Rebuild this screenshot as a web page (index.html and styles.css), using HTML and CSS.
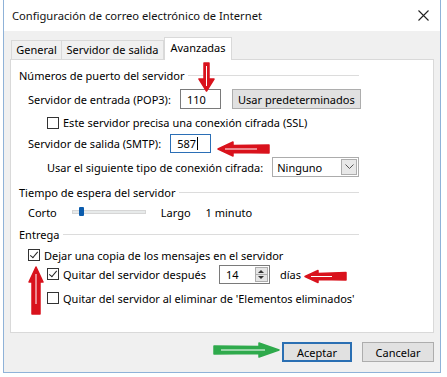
FILE: index.html
```html
<!DOCTYPE html>
<html lang="es">
<head>
    <meta charset="utf-8">
    <title>Configuración de correo electrónico de Internet</title>
    <link rel="stylesheet" href="styles.css">
</head>
<body>
    <div class="window">
        <div class="titleBar">
            <span class="title">Configuración de correo electrónico de Internet</span>
            <svg class="closeIcon" width="11" height="11" viewBox="0 0 11 11">
                <path d="M0.5 0.5 L10.5 10.5 M10.5 0.5 L0.5 10.5" stroke="#222" stroke-width="1.1" fill="none"/>
            </svg>
        </div>
        <div class="dialogBody">
            <div class="tabs">
                <div class="tab tabGeneral">General</div>
                <div class="tab tabOutgoing">Servidor de salida</div>
                <div class="tab tabActive">Avanzadas</div>
            </div>
            <div class="panel">
                <div class="groupTitle rowFirst"><span>Números de puerto del servidor</span></div>

                <div class="row rowPop">
                    <span class="label">Servidor de entrada (POP3):</span>
                    <div class="textBox boxPop">110</div>
                    <button class="winButton btnDefaults">Usar predeterminados</button>
                </div>

                <div class="row rowSsl indent2">
                    <span class="checkBox"></span>
                    <span>Este servidor precisa una conexión cifrada (SSL)</span>
                </div>

                <div class="row rowSmtp">
                    <span class="label">Servidor de salida (SMTP):</span>
                    <div class="textBox boxSmtp focused">587<span class="caret"></span></div>
                </div>

                <div class="row rowEnc indent2">
                    <span class="label">Usar el siguiente tipo de conexión cifrada:</span>
                    <div class="comboBox">
                        <span class="comboText">Ninguno</span>
                        <span class="comboArrow">
                            <svg width="9" height="6" viewBox="0 0 9 6"><path d="M0.5 0.5 L4.5 4.5 L8.5 0.5" stroke="#555" fill="none"/></svg>
                        </span>
                    </div>
                </div>

                <div class="groupTitle rowTimeout"><span>Tiempo de espera del servidor</span></div>

                <div class="row rowSlider">
                    <span class="sliderLabel">Corto</span>
                    <div class="slider"><span class="sliderThumb"></span></div>
                    <span class="sliderLabel">Largo</span>
                    <span>1 minuto</span>
                </div>

                <div class="groupTitle rowDelivery"><span>Entrega</span></div>

                <div class="row rowLeave">
                    <span class="checkBox checked"></span>
                    <span>Dejar una copia de los mensajes en el servidor</span>
                </div>

                <div class="row rowRemove indent2">
                    <span class="checkBox checked"></span>
                    <span class="removeText">Quitar del servidor después</span>
                    <div class="spinBox">
                        <span class="spinText">14</span>
                        <span class="spinButtons">
                            <span class="spinUp"></span>
                            <span class="spinDown"></span>
                        </span>
                    </div>
                    <span>días</span>
                </div>

                <div class="row rowDeleted indent2">
                    <span class="checkBox"></span>
                    <span>Quitar del servidor al eliminar de 'Elementos eliminados'</span>
                </div>
            </div>

            <div class="dialogButtons">
                <button class="winButton btnOk">Aceptar</button>
                <button class="winButton btnCancel">Cancelar</button>
            </div>
        </div>

        <!-- hand drawn arrows on top of the dialog -->
        <svg class="arrow arrowDown" width="20" height="30" viewBox="0 0 20 30">
            <path d="M7 1 L12 1 L12 17 L17 17 L9.5 29 L2 17 L7 17 Z" fill="#d9121c" stroke="#d9121c" stroke-linejoin="round" stroke-width="1.5"/>
            <path d="M9.5 4 L9.5 24" stroke="#fff" stroke-width="1"/>
        </svg>
        <svg class="arrow arrowSmtp" width="54" height="18" viewBox="0 0 54 18">
            <path d="M1 9 L16 2 L16 5.5 L52 5 L52 13 L16 12.5 L16 16 Z" fill="#d9121c" stroke="#d9121c" stroke-linejoin="round" stroke-width="1.5"/>
            <path d="M8 9 L40 9" stroke="#fff" stroke-width="1"/>
        </svg>
        <svg class="arrow arrowDays" width="44" height="15" viewBox="0 0 44 15">
            <path d="M1 7.5 L14 1.5 L14 4.5 L42 3.5 L42 11 L14 10.5 L14 13.5 Z" fill="#d9121c" stroke="#d9121c" stroke-linejoin="round" stroke-width="1.5"/>
            <path d="M7 7.5 L28 7.5" stroke="#fff" stroke-width="1"/>
        </svg>
        <svg class="arrow arrowUp" width="16" height="50" viewBox="0 0 16 50">
            <path d="M8 1 L15 16 L12 16 L12 48 L4 48 L4 16 L1 16 Z" fill="#d9121c" stroke="#d9121c" stroke-linejoin="round" stroke-width="1.5"/>
            <path d="M8 8 L8 38" stroke="#fff" stroke-width="1"/>
        </svg>
        <svg class="arrow arrowOk" width="68" height="18" viewBox="0 0 68 18">
            <path d="M1 5 L46 5.5 L46 2 L66 9 L46 16 L46 12.5 L1 13 Z" fill="#2faa4c" stroke="#2faa4c" stroke-linejoin="round" stroke-width="1.5"/>
            <path d="M8 9 L52 9" stroke="#fff" stroke-width="1"/>
        </svg>
    </div>
</body>
</html>
```

FILE: styles.css
```css
body {
    margin: 0;
    padding: 0;
    background-color: #ffffff;
    color: #000;
    font: 11px 'Noto Sans', 'Liberation Sans', sans-serif;
}

.window {
    position: relative;
    width: 436px;
    height: 372px;
    margin-left: 3px;
    border: 1px solid #8fb2d8;
    border-top: none;
    background-color: #f0f0f0;
}

.titleBar {
    height: 31px;
    background-color: #ffffff;
    display: flex;
    align-items: center;
    justify-content: space-between;
    padding: 0 8px 0 8px;
}

.title {
    font-size: 11.2px;
    color: #111;
    padding-bottom: 1px;
}

.closeIcon {
    margin-right: 3px;
}

.dialogBody {
    padding: 8px 6px 0 6px;
}

/* tabs */
.tabs {
    display: flex;
    align-items: flex-end;
    height: 20px;
    padding-left: 1px;
}

.tab {
    height: 19px;
    box-sizing: border-box;
    border: 1px solid #d9d9d9;
    border-bottom: none;
    background-color: #f0f0f0;
    line-height: 18px;
    text-align: center;
}

.tabGeneral {
    width: 51px;
}

.tabOutgoing {
    width: 102px;
    border-left: none;
}

.tabActive {
    width: 68px;
    height: 23px;
    margin-bottom: -1px;
    background-color: #ffffff;
    position: relative;
    z-index: 1;
    line-height: 20px;
}

.panel {
    height: 272px;
    border: 1px solid #d9d9d9;
    background-color: #ffffff;
}

/* rows inside the panel */
.row {
    display: flex;
    align-items: center;
    padding-left: 17px;
    white-space: nowrap;
}

.indent2 {
    padding-left: 36px;
}

.groupTitle {
    display: flex;
    align-items: center;
    width: 340px;
    height: 18px;
    margin-left: 8px;
    white-space: nowrap;
}

.groupTitle::after {
    content: "";
    flex: 1;
    border-top: 1px solid #dcdcdc;
    margin-left: 4px;
}

.rowFirst { margin-top: 6px; }
.rowPop { height: 20px; margin-top: 5px; }
.rowSsl { height: 17px; margin-top: 5px; }
.rowSmtp { height: 19px; margin-top: 3px; }
.rowEnc { height: 20px; margin-top: 4px; }
.rowTimeout { margin-top: 6px; }
.rowSlider { height: 18px; margin-top: 2px; }
.rowDelivery { margin-top: 4px; }
.rowLeave { height: 18px; margin-top: 3px; }
.rowRemove { height: 20px; margin-top: 0; }
.rowDeleted { height: 18px; margin-top: 5px; }

.label {
    margin-right: 9px;
}

.textBox {
    box-sizing: border-box;
    border: 1px solid #7a7a7a;
    background-color: #fff;
    padding-left: 6px;
    display: flex;
    align-items: center;
}

.boxPop {
    width: 41px;
    height: 20px;
    margin-right: 11px;
}

.boxSmtp {
    width: 41px;
    height: 19px;
}

.focused {
    border-color: #2b6fb6;
}

.caret {
    display: inline-block;
    width: 1px;
    height: 13px;
    background-color: #000;
    margin-left: 1px;
}

.checkBox {
    display: inline-block;
    box-sizing: border-box;
    width: 12px;
    height: 12px;
    border: 1px solid #333;
    background-color: #fff;
    margin-right: 4px;
    position: relative;
}

.checkBox.checked::after {
    content: "";
    position: absolute;
    left: 3px;
    top: 0px;
    width: 3px;
    height: 7px;
    border-right: 1.5px solid #222;
    border-bottom: 1.5px solid #222;
    transform: rotate(40deg);
}

.comboBox {
    box-sizing: border-box;
    width: 87px;
    height: 20px;
    border: 1px solid #acacac;
    background-color: #fff;
    display: flex;
    align-items: center;
    justify-content: space-between;
    padding: 0 1px 0 4px;
}

.comboArrow {
    box-sizing: border-box;
    width: 16px;
    height: 16px;
    border: 1px solid #adadad;
    background-color: #e8e8e8;
    display: flex;
    align-items: center;
    justify-content: center;
}

.sliderLabel {
    margin-right: 15px;
}

.slider {
    position: relative;
    box-sizing: border-box;
    width: 74px;
    height: 4px;
    background-color: #e7eaea;
    border: 1px solid #d6d6d6;
    margin-right: 15px;
}

.sliderThumb {
    position: absolute;
    left: 6px;
    top: -4px;
    width: 5px;
    height: 9px;
    border-radius: 1px;
    background-color: #0b5cad;
}

.removeText {
    margin-right: 13px;
}

.spinBox {
    box-sizing: border-box;
    width: 51px;
    height: 19px;
    border: 1px solid #7a7a7a;
    background-color: #fff;
    display: flex;
    align-items: center;
    justify-content: space-between;
    padding: 1px 1px 1px 6px;
    margin-right: 10px;
}

.spinButtons {
    display: flex;
    flex-direction: column;
    width: 13px;
    height: 15px;
    border: 1px solid #adadad;
    box-sizing: border-box;
    background-color: #e5e5e5;
}

.spinUp,
.spinDown {
    flex: 1;
    position: relative;
}

.spinDown {
    border-top: 1px solid #adadad;
}

.spinUp::after,
.spinDown::after {
    content: "";
    position: absolute;
    left: 2.5px;
    width: 0;
    height: 0;
    border-left: 3px solid transparent;
    border-right: 3px solid transparent;
}

.spinUp::after {
    top: 2px;
    border-bottom: 3px solid #333;
}

.spinDown::after {
    top: 1px;
    border-top: 3px solid #333;
}

/* buttons */
.winButton {
    box-sizing: border-box;
    height: 20px;
    border: 1px solid #adadad;
    background-color: #e1e1e1;
    font: 11px 'Noto Sans', 'Liberation Sans', sans-serif;
    color: #000;
    padding: 0;
}

.btnDefaults {
    width: 129px;
}

.dialogButtons {
    display: flex;
    justify-content: flex-end;
    gap: 10px;
    margin-top: 9px;
    padding-right: 0px;
}

.btnOk {
    width: 70px;
    border: 2px solid #2a6fb3;
}

.btnCancel {
    width: 72px;
}

/* arrows drawn over the screenshot */
.arrow {
    position: absolute;
}

.arrowDown { left: 193px; top: 62px; }
.arrowSmtp { left: 213px; top: 140px; }
.arrowDays { left: 300px; top: 269px; }
.arrowUp { left: 24px; top: 266px; }
.arrowOk { left: 209px; top: 341px; }
```
